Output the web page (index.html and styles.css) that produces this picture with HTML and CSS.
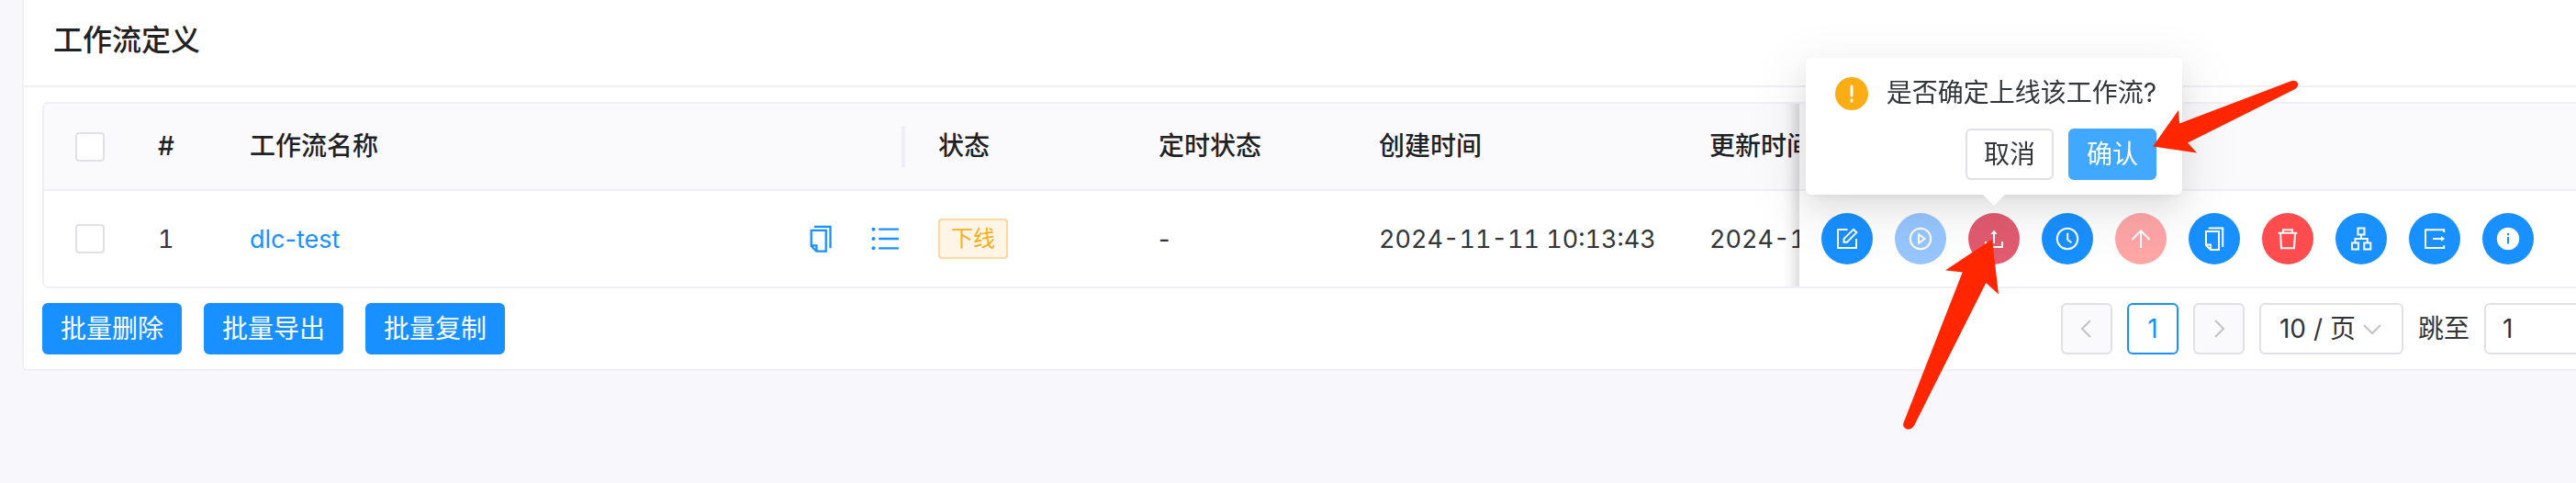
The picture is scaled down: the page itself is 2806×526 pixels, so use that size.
FILE: index.html
```
<!doctype html>
<html lang="zh-CN">
<head>
  <meta charset="utf-8">
  <meta name="viewport" content="width=device-width, initial-scale=1">
  <title>工作流定义</title>
  <link rel="stylesheet" href="styles.css">
</head>
<body>
<svg class="sprite" aria-hidden="true">
  <symbol id="icon-copy" viewBox="0 0 28 28">
    <path d="M7.7 2.6H23.2V23"/>
    <path d="M5 6h14v20h-9l-5-5zM5 20.5h5V26"/>
  </symbol>
</svg>

<main class="card">
  <header class="card-header">
    <h1>工作流定义</h1>
  </header>

  <div class="card-content">
    <div class="table-wrap">
      <table class="table">
        <colgroup>
          <col class="col-check">
          <col class="col-index">
          <col>
          <col class="col-status">
          <col class="col-status">
          <col class="col-time">
          <col class="col-time">
          <col class="col-actions">
        </colgroup>
        <thead>
          <tr>
            <th><input type="checkbox" class="checkbox" aria-label="全选"></th>
            <th>#</th>
            <th class="resizable">工作流名称</th>
            <th>状态</th>
            <th>定时状态</th>
            <th>创建时间</th>
            <th>更新时间</th>
            <th class="fixed">操作</th>
          </tr>
        </thead>
        <tbody>
          <tr>
            <td><input type="checkbox" class="checkbox" aria-label="选择 dlc-test"></td>
            <td class="num">1</td>
            <td class="name-cell">
              <div class="name">
                <a href="#">dlc-test</a>
                <div class="name-icons">
                  <button type="button" class="icon-btn" aria-label="复制名称">
                    <svg class="icon"><use href="#icon-copy"/></svg>
                  </button>
                  <button type="button" class="icon-btn" aria-label="实例列表">
                    <svg class="icon" viewBox="0 0 28 28">
                      <path d="M8 5h19M8 14h19M8 23h19"/>
                      <g class="solid"><circle cx="3" cy="5" r="1.7"/><circle cx="3" cy="14" r="1.7"/><circle cx="3" cy="23" r="1.7"/></g>
                    </svg>
                  </button>
                </div>
              </div>
            </td>
            <td><span class="tag">下线</span></td>
            <td>-</td>
            <td class="num">2024-11-11 10:13:43</td>
            <td class="num">2024-11-11 10:13:43</td>
            <td class="fixed">
              <div class="actions">
                <button type="button" class="round" aria-label="编辑">
                  <svg class="icon" viewBox="0 0 28 28"><path d="M14.5 4H4v20h20V14"/><path d="M10.5 17.7v-3.6L21 3.8l3.3 3.3L14 17.7z"/></svg>
                </button>
                <button type="button" class="round run" aria-label="运行">
                  <svg class="icon" viewBox="0 0 28 28"><circle cx="14" cy="14" r="11.2"/><path d="M12 9.3l6.6 4.7-6.6 4.7z"/></svg>
                </button>
                <button type="button" class="round online" aria-label="上线">
                  <svg class="icon" viewBox="0 0 28 28"><path d="M5 17v6h18v-6M14 19V8"/><path class="solid" d="M14 4.5l3.5 4.5h-7z"/></svg>
                </button>
                <button type="button" class="round" aria-label="定时">
                  <svg class="icon" viewBox="0 0 28 28"><circle cx="14" cy="14" r="11.2"/><path d="M14.2 7.8V15l4.2 3.2"/></svg>
                </button>
                <button type="button" class="round timing" aria-label="定时上线">
                  <svg class="icon" viewBox="0 0 28 28"><path d="M14 24V5M4.5 15L14 5.2l9.5 9.8"/></svg>
                </button>
                <button type="button" class="round" aria-label="复制工作流">
                  <svg class="icon"><use href="#icon-copy"/></svg>
                </button>
                <button type="button" class="round delete" aria-label="删除">
                  <svg class="icon" viewBox="0 0 28 28"><path d="M3.7 7.7h20.6M9 7.7V4.3h10v3.4M6 8l1 16.3h14L22 8"/></svg>
                </button>
                <button type="button" class="round" aria-label="树形图">
                  <svg class="icon" viewBox="0 0 28 28"><path d="M10.5 2.6h7v7h-7zM4 18.6h7v7H4zM17.3 18.6h7v7h-7zM14 10v4M7.5 18v-4h13.3v4"/></svg>
                </button>
                <button type="button" class="round" aria-label="导出">
                  <svg class="icon" viewBox="0 0 28 28"><path d="M24.2 7V4.3H4V24h20.2v-2.7M12 14h10"/><path class="solid" d="M21 11l4.2 3-4.2 3z"/></svg>
                </button>
                <button type="button" class="round" aria-label="版本信息">
                  <svg class="icon" viewBox="0 0 28 28"><circle class="solid" cx="14" cy="14" r="12.2"/><path class="letter" d="M14 12v7.5M14 8v2.2"/></svg>
                </button>
              </div>
            </td>
          </tr>
        </tbody>
      </table>
    </div>

    <footer class="footer">
      <div class="batch">
        <button type="button" class="btn primary">批量删除</button>
        <button type="button" class="btn primary">批量导出</button>
        <button type="button" class="btn primary">批量复制</button>
      </div>
      <nav class="pagination" aria-label="分页">
        <button type="button" class="page" disabled aria-label="上一页">
          <svg class="chevron" viewBox="0 0 20 20"><path d="M14 1L5 10l9 9"/></svg>
        </button>
        <button type="button" class="page current">1</button>
        <button type="button" class="page" disabled aria-label="下一页">
          <svg class="chevron" viewBox="0 0 20 20"><path d="M6 1l9 9-9 9"/></svg>
        </button>
        <div class="page-size">
          <select aria-label="每页条数">
            <option>10 / 页</option>
            <option>30 / 页</option>
            <option>50 / 页</option>
          </select>
          <svg class="chevron" viewBox="0 0 20 20"><path d="M1 6l9 9 9-9"/></svg>
        </div>
        <label for="jumper">跳至</label>
        <input type="text" id="jumper" class="jumper" value="1">
      </nav>
    </footer>
  </div>
</main>

<div class="popconfirm" role="dialog" aria-labelledby="confirm-text">
  <div class="popconfirm-body">
    <svg class="warning" viewBox="0 0 44 44"><circle cx="22" cy="22" r="18"/><path d="M22 14v10M22 29v1"/></svg>
    <span id="confirm-text">是否确定上线该工作流?</span>
  </div>
  <div class="popconfirm-action">
    <button type="button" class="btn">取消</button>
    <button type="button" class="btn primary hover">确认</button>
  </div>
</div>

<!-- pointers to the confirm and online buttons -->
<svg class="pointers" viewBox="2066 80 440 400" aria-hidden="true">
  <path d="M2345 159.500L2373 120l1 14.500L2495 88.500q6-2 8 2q1 4-3 6.500L2383 155.500l10 11z"/>
  <path d="M2170 260.500L2119 294.500l18.700 2L2073.300 461q-1 4 3 6q5 2 9-4L2163.300 308l13.700 12.500z"/>
</svg>
</body>
</html>
```
FILE: styles.css
```
* {
  box-sizing: border-box;
}

body {
  margin: 0;
  min-height: 100vh;
  overflow: hidden;
  background-color: #f7f7fc;
  color: #333639;
  font-family: Inter, "Noto Sans CJK SC", sans-serif;
  font-size: 28px;
  line-height: 45px;
}

button,
input,
select {
  font: inherit;
  color: inherit;
}

button {
  padding: 0;
  border: 0;
  cursor: pointer;
}

a {
  color: #1890ff;
  text-decoration: none;
}

.sprite {
  display: block;
  width: 0;
  height: 0;
}

/* the content pane is a little wider than the window */
.card {
  width: calc(100% + 18px);
  margin-left: 24px;
  background-color: #fff;
  border: 2px solid #efeff5;
  border-top: 0;
  border-radius: 0 0 6px 6px;
}

.card-header {
  padding: 18px 32px 24px;
  border-bottom: 2px solid #efeff5;
}

h1 {
  margin: 0;
  color: #1f2225;
  font-size: 32px;
  font-weight: 500;
  line-height: 51px;
}

.card-content {
  padding: 16px 20px;
}

/* table */
.table-wrap {
  overflow: hidden;
  border: 2px solid #efeff5;
  border-radius: 6px;
}

.table {
  width: calc(100% + 238px);
  table-layout: fixed;
  border-collapse: separate;
  border-spacing: 0;
}

.col-check,
.col-index {
  width: 100px;
}

.col-status {
  width: 240px;
}

.col-time {
  width: 360px;
}

.col-actions {
  width: 864px;
}

th,
td {
  padding: 24px;
  text-align: left;
  white-space: nowrap;
  background-color: #fff;
}

th {
  position: relative;
  color: #1f2225;
  font-weight: 500;
  background-color: #fafafc;
  border-bottom: 2px solid #efeff5;
}

td {
  height: 104px;
  padding: 0 24px;
  font-size: 27px;
}

th:first-child,
td:first-child {
  padding-left: 34px;
}

.num {
  font-variant-numeric: tabular-nums;
}

.resizable::after {
  content: "";
  position: absolute;
  top: 24px;
  right: 12px;
  width: 4px;
  height: 46px;
  background-color: #efeff5;
}

.fixed {
  position: sticky;
  right: 0;
}

.fixed::before {
  content: "";
  position: absolute;
  top: 0;
  bottom: -2px;
  left: -72px;
  width: 72px;
  box-shadow: inset -20px 0 16px -16px rgba(0, 0, 0, 0.18);
  pointer-events: none;
}

.checkbox {
  display: block;
  width: 32px;
  height: 32px;
  margin: 0;
  appearance: none;
  background-color: #fff;
  border: 2px solid #e0e0e6;
  border-radius: 4px;
}

.name-cell {
  padding-right: 18px;
}

.name,
.name-icons,
.actions,
.footer,
.batch,
.pagination,
.popconfirm-body,
.popconfirm-action {
  display: flex;
  align-items: center;
}

.name {
  justify-content: space-between;
}

.name-icons {
  gap: 38px;
}

.icon {
  display: block;
  width: 28px;
  height: 28px;
  fill: none;
  stroke: currentColor;
  stroke-width: 2;
}

.icon .solid {
  fill: currentColor;
  stroke: none;
}

.icon .letter {
  stroke: #1890ff;
}

.icon-btn {
  color: #1890ff;
  background: none;
}

.icon-btn .icon {
  width: 32px;
  height: 32px;
}

.tag {
  display: block;
  width: max-content;
  padding: 0 12px;
  color: #faad14;
  font-size: 24px;
  line-height: 40px;
  background-color: #fff5e7;
  border: 2px solid #fbd9a0;
  border-radius: 4px;
}

.actions {
  gap: 24px;
}

.round {
  display: flex;
  align-items: center;
  justify-content: center;
  width: 56px;
  height: 56px;
  color: #fff;
  background-color: #1890ff;
  border-radius: 50%;
}

.round.run {
  background-color: #97c6ff;
}

.round.online {
  background-color: #e25b70;
}

.round.timing {
  background-color: #ffa6a7;
}

.round.delete {
  background-color: #ff4d4f;
}

/* footer */
.footer {
  justify-content: space-between;
  margin-top: 16px;
}

.batch {
  gap: 24px;
}

.btn {
  height: 56px;
  padding: 0 18px;
  background-color: #fff;
  border: 2px solid #e0e0e6;
  border-radius: 6px;
}

.btn.primary {
  color: #fff;
  background-color: #1890ff;
  border-color: #1890ff;
}

.btn.hover {
  background-color: #40a9ff;
  border-color: #40a9ff;
}

.pagination {
  gap: 16px;
}

.page {
  display: flex;
  align-items: center;
  justify-content: center;
  width: 56px;
  height: 56px;
  background-color: #fff;
  border: 2px solid #e0e0e6;
  border-radius: 6px;
}

.page:disabled {
  background-color: #fafafc;
}

.page.current {
  color: #1890ff;
  border-color: #1890ff;
}

.chevron {
  width: 20px;
  height: 20px;
  fill: none;
  stroke: #c2c2c2;
  stroke-width: 2;
}

.page-size {
  display: grid;
  align-items: center;
}

.page-size select,
.page-size .chevron {
  grid-area: 1 / 1;
}

.page-size select {
  width: 157px;
  height: 56px;
  padding: 0 48px 0 20px;
  appearance: none;
  background-color: #fff;
  border: 2px solid #e0e0e6;
  border-radius: 6px;
}

.page-size .chevron {
  justify-self: end;
  margin-right: 24px;
  pointer-events: none;
}

.jumper {
  width: 120px;
  height: 56px;
  padding: 0 18px;
  background-color: #fff;
  border: 2px solid #e0e0e6;
  border-radius: 6px;
}

/* confirm popover */
.popconfirm {
  position: absolute;
  top: 63px;
  right: 429px;
  padding: 16px 28px;
  background-color: #fff;
  border-radius: 6px;
  box-shadow: 0 6px 12px -8px rgba(0, 0, 0, 0.12),
    0 12px 32px rgba(0, 0, 0, 0.08),
    0 18px 56px 16px rgba(0, 0, 0, 0.06);
}

.popconfirm::after {
  content: "";
  position: absolute;
  top: 100%;
  left: 50%;
  margin-left: -12px;
  border: 12px solid transparent;
  border-top-color: #fff;
  border-bottom: 0;
}

.popconfirm-body {
  gap: 16px;
}

.warning {
  width: 44px;
  height: 44px;
  fill: #faad14;
}

.warning path {
  stroke: #fff;
  stroke-width: 3;
  stroke-linecap: round;
}

.popconfirm-action {
  justify-content: flex-end;
  gap: 16px;
  margin-top: 16px;
}

.pointers {
  position: absolute;
  top: 80px;
  right: 300px;
  width: 440px;
  height: 400px;
  fill: #ff2600;
  pointer-events: none;
}
```
